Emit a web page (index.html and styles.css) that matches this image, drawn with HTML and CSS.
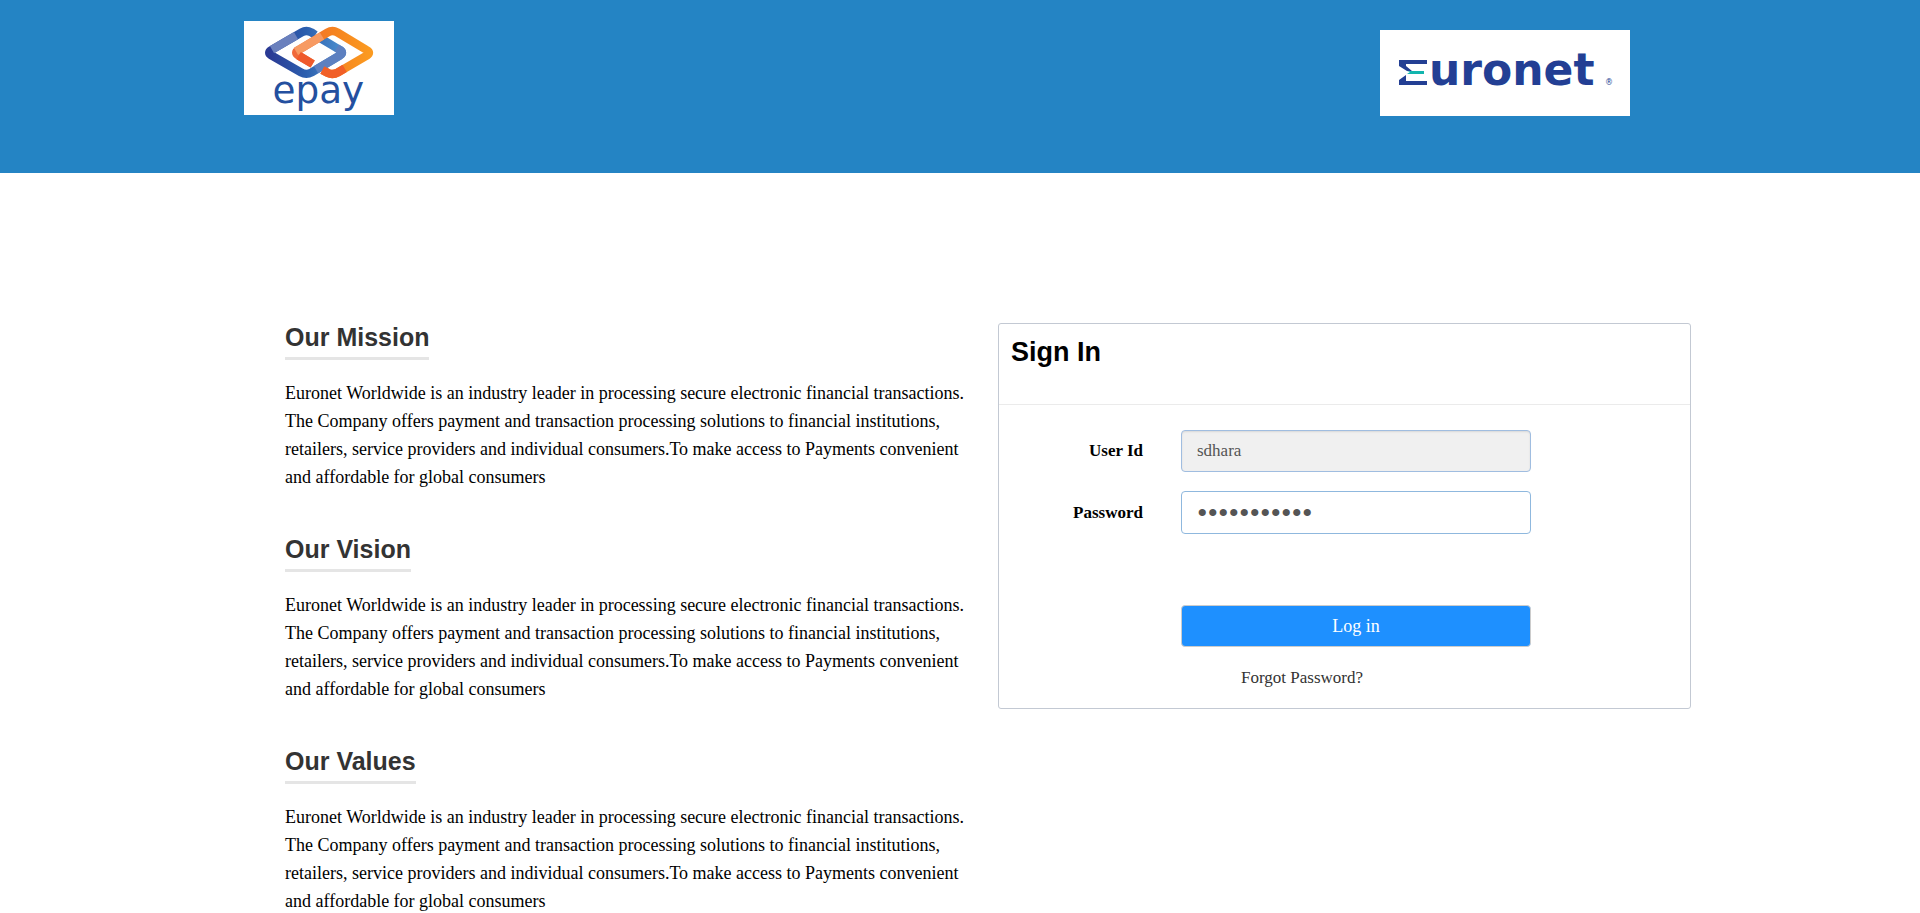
FILE: index.html
```html
<!DOCTYPE html>
<html lang="en">
<head>
<meta charset="utf-8">
<title>Sign In</title>
<link rel="stylesheet" href="styles.css">
</head>
<body>
<header class="banner">
  <svg class="logo-epay" viewBox="0 0 450 282" role="img" aria-label="epay">
    <defs>
      <linearGradient id="blue" x1="0" y1="0" x2="1" y2="0">
        <stop offset="0" stop-color="#2a3a94"/>
        <stop offset="0.5" stop-color="#2c5fae"/>
        <stop offset="1" stop-color="#4d8fcf"/>
      </linearGradient>
      <linearGradient id="orange" x1="0" y1="0" x2="1" y2="0">
        <stop offset="0" stop-color="#f0693a"/>
        <stop offset="0.5" stop-color="#f58220"/>
        <stop offset="1" stop-color="#fb9a20"/>
      </linearGradient>
    </defs>
    <rect width="450" height="282" fill="#fff"/>
    <g fill="none" stroke-width="25" stroke-linejoin="round">
      <path d="M214 42 L202 34 Q187 26 173 34 L82 87 Q69 95 82 103 L171 154 Q187 163 203 154 L288 103 Q300 95 288 87 L226 50" stroke="url(#blue)"/>
      <path d="M206 129 L164 104 Q149 95 164 87 L250 35 Q265 26 280 34 L368 87 Q382 95 368 104 L282 154 Q266 163 252 156 L235 147" stroke="url(#orange)"/>
      <path d="M216 146 L288 103 Q300 95 288 87 L278 81" stroke="#5d80c0"/>
      <path d="M84 86 L156 44" stroke="#6a80bd"/>
      <path d="M156 91 L234 45" stroke="#f79a62"/>
      <path d="M206 129 L164 104" stroke="#ef5a2c"/>
      <path d="M235 147 L252 156 Q266 163 282 154 L302 142" stroke="#f15f27"/>
    </g>
    <text class="epay-word" x="223" y="246" text-anchor="middle">epay</text>
  </svg>
  <svg class="logo-euronet" viewBox="0 0 250 86" role="img" aria-label="Euronet">
    <rect width="250" height="86" fill="#fff"/>
    <path d="M19 30 H47 V34 H26 V36 L32 41 H27 L19 36 Z" fill="#233f94"/>
    <path d="M19 55 H47 V51 H26 V45 L19 50 Z" fill="#233f94"/>
    <path d="M27 41 H44 V44 H27 L30 42 Z" fill="#12b5ae"/>
    <text class="euronet-word" x="49" y="55">uronet</text>
    <text class="euronet-mark" x="225" y="55">®</text>
  </svg>
</header>
<main class="content">
  <div class="about">
    <section>
      <h2>Our Mission</h2>
      <p>Euronet Worldwide is an industry leader in processing secure electronic financial transactions. The Company offers payment and transaction processing solutions to financial institutions, retailers, service providers and individual consumers.To make access to Payments convenient and affordable for global consumers</p>
    </section>
    <section>
      <h2>Our Vision</h2>
      <p>Euronet Worldwide is an industry leader in processing secure electronic financial transactions. The Company offers payment and transaction processing solutions to financial institutions, retailers, service providers and individual consumers.To make access to Payments convenient and affordable for global consumers</p>
    </section>
    <section>
      <h2>Our Values</h2>
      <p>Euronet Worldwide is an industry leader in processing secure electronic financial transactions. The Company offers payment and transaction processing solutions to financial institutions, retailers, service providers and individual consumers.To make access to Payments convenient and affordable for global consumers</p>
    </section>
  </div>
  <form class="card">
    <h1>Sign In</h1>
    <div class="fields">
      <label for="user">User Id</label>
      <input id="user" type="text" value="sdhara" readonly>
      <label for="pass">Password</label>
      <input id="pass" type="password" value="abcdefghijk">
      <button type="button">Log in</button>
      <a href="#">Forgot Password?</a>
    </div>
  </form>
</main>
</body>
</html>
```
FILE: styles.css
```css
* { box-sizing: border-box; }
body {
  margin: 0;
  background: #fff;
  color: #000;
  font-family: "Liberation Serif", "Times New Roman", serif;
  font-size: 17px;
}
.banner {
  display: flex;
  justify-content: space-between;
  align-items: flex-start;
  height: 173px;
  padding: 21px 290px 0 244px;
  background: #2484c4;
}
.logo-epay { width: 150px; height: 94px; }
.logo-euronet { width: 250px; height: 86px; margin-top: 9px; }
.epay-word { font: 112px "DejaVu Sans", sans-serif; fill: #24509f; }
.euronet-word { font: bold 44px "DejaVu Sans", sans-serif; fill: #233f94; }
.euronet-mark { font: 8px "DejaVu Sans", sans-serif; fill: #233f94; }

.content {
  display: grid;
  grid-template-columns: 1fr 1fr;
  gap: 20px;
  align-items: start;
  padding: 150px 229px 0 285px;
}
.about section + section { margin-top: 44px; }
.about h2 {
  width: fit-content;
  margin: 0 0 19px;
  padding-bottom: 5px;
  border-bottom: 3px solid #e5e5e5;
  color: #333;
  font: bold 25px/29px "Liberation Sans", Arial, sans-serif;
}
.about p { margin: 0; font-size: 18px; line-height: 28px; }

.card {
  border: 1px solid #c3c9d3;
  border-radius: 3px;
}
.card h1 {
  margin: 0;
  padding: 12px 12px 36px;
  border-bottom: 1px solid #ebebeb;
  font: bold 27px/32px "Liberation Sans", Arial, sans-serif;
}
.fields {
  display: grid;
  grid-template-columns: 144px 350px;
  column-gap: 38px;
  row-gap: 19px;
  align-items: center;
  padding: 25px 0 18px;
}
label { text-align: right; font-weight: bold; }
input, button {
  width: 100%;
  height: 42px;
  border: 1px solid #8fb8de;
  border-radius: 4px;
  font: inherit;
}
input { padding: 0 15px; background: #fff; color: #555; outline: none; }
input[readonly] {
  border-color: #a0bde0;
  background: #f0f0f0;
  box-shadow: inset 0 1px 2px rgba(0, 0, 0, 0.1);
}
input[type="password"] {
  height: 43px;
  font-size: 30px;
}
button {
  grid-column: 2;
  margin-top: 52px;
  border-color: #ccc;
  background: #1e90ff;
  color: #fff;
  font-size: 18px;
}
.fields a {
  grid-column: 2;
  padding-left: 60px;
  color: #333;
  line-height: 24px;
  text-decoration: none;
}
```
